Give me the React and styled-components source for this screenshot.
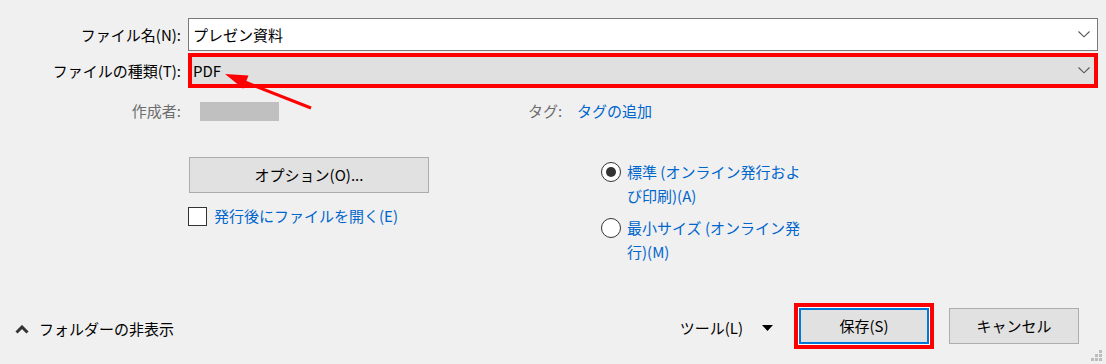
import React from 'react';
import styled, { createGlobalStyle } from 'styled-components';

const GlobalStyle = createGlobalStyle`
  html, body {
    margin: 0;
    padding: 0;
    background: #f0f0f0;
  }
  body {
    font-family: "Noto Sans CJK JP", "Noto Sans", sans-serif;
    font-size: 15px;
    color: #000;
  }
`;

const Dialog = styled.div`
  position: relative;
  width: 1106px;
  height: 364px;
  box-sizing: border-box;
  padding-top: 18px;
  display: flex;
  flex-direction: column;
  background: #f0f0f0;
  overflow: hidden;
`;

const FieldRow = styled.div`
  display: grid;
  grid-template-columns: 181px 1fr;
  column-gap: 7px;
  align-items: center;
  margin-top: ${p => p.$top || 0}px;
  padding-right: 8px;
`;

const Label = styled.div`
  text-align: right;
  line-height: 20px;
  white-space: nowrap;
  color: ${p => (p.$muted ? '#6d6d6d' : '#000')};
`;

const Combo = styled.div`
  height: ${p => p.$h}px;
  box-sizing: border-box;
  display: flex;
  align-items: center;
  justify-content: space-between;
  border: ${p => (p.$highlight ? '4px solid #ff0000' : '1px solid #7a7a7a')};
  background: ${p => (p.$highlight ? '#e0e0e0' : '#fff')};
  padding: 0 ${p => (p.$highlight ? 4 : 7)}px 0 ${p => (p.$highlight ? 1 : 4)}px;
  line-height: 20px;
`;

const MetaRow = styled.div`
  display: grid;
  grid-template-columns: 181px 347px 49px auto;
  align-items: center;
  height: 22px;
  margin-top: 12px;
  line-height: 20px;
`;

const AuthorBox = styled.div`
  width: 79px;
  height: 19px;
  margin-left: 19px;
  background: #c0c0c0;
`;

const Link = styled.span`
  color: #0066cc;
  white-space: nowrap;
`;

const OptionsArea = styled.div`
  display: grid;
  grid-template-columns: 188px 413px auto;
  margin-top: 35px;
`;

const LeftColumn = styled.div`
  grid-column: 2;
  display: flex;
  flex-direction: column;
  align-items: flex-start;
`;

const Button = styled.button`
  width: ${p => p.$w}px;
  height: 36px;
  box-sizing: border-box;
  border: 1px solid #adadad;
  background: #e1e1e1;
  font: inherit;
  color: #000;
  padding: 0;
  line-height: 20px;
`;

const CheckRow = styled.label`
  display: flex;
  align-items: center;
  gap: 7px;
  margin-top: 13px;
  line-height: 20px;
`;

const CheckBox = styled.span`
  width: 19px;
  height: 19px;
  box-sizing: border-box;
  border: 1px solid #333;
  background: #fff;
`;

const RadioGroup = styled.div`
  grid-column: 3;
  display: flex;
  flex-direction: column;
  gap: 8px;
  margin-top: 3px;
`;

const RadioItem = styled.label`
  display: grid;
  grid-template-columns: 20px 180px;
  column-gap: 6px;
  align-items: start;
  line-height: 24px;
`;

const RadioCircle = styled.span`
  width: 20px;
  height: 20px;
  box-sizing: border-box;
  margin-top: 2px;
  border: 1px solid #333;
  border-radius: 50%;
  background: #fff;
  display: flex;
  align-items: center;
  justify-content: center;
  &::after {
    content: '';
    width: 10px;
    height: 10px;
    border-radius: 50%;
    background: ${p => (p.$checked ? '#333' : 'transparent')};
  }
`;

const Footer = styled.div`
  margin-top: auto;
  height: 46px;
  margin-bottom: 15px;
  display: flex;
  align-items: center;
  padding: 0 27px 0 15px;
  line-height: 20px;
`;

const FolderToggle = styled.div`
  display: flex;
  align-items: center;
  gap: 10px;
  margin-top: 6px;
`;

const Spacer = styled.div`
  flex: 1;
`;

const Tools = styled.div`
  display: flex;
  align-items: center;
  gap: 19px;
  margin-top: 3px;
`;

const SaveFrame = styled.div`
  margin-left: 21px;
  border: 4px solid #ff0000;
  padding: 1px;
  background: #fff;
  display: flex;
`;

const SaveButton = styled(Button)`
  border: 2px solid #0078d7;
`;

const CancelButton = styled(Button)`
  margin-left: 15px;
`;

const Annotation = styled.svg`
  position: absolute;
  left: 0;
  top: 0;
  pointer-events: none;
`;

const Grip = styled.svg`
  position: absolute;
  right: 3px;
  bottom: 2px;
`;

const Chevron = () => (
  <svg width="12" height="7" viewBox="0 0 12 7">
    <polyline points="0.5,0.5 6,5.8 11.5,0.5" fill="none" stroke="#555" strokeWidth="1.1" />
  </svg>
);

export default function App() {
  return (
    <>
      <GlobalStyle />
      <Dialog>
        <FieldRow>
          <Label>ファイル名(N):</Label>
          <Combo $h={33}>
            <span>プレゼン資料</span>
            <Chevron />
          </Combo>
        </FieldRow>
        <FieldRow $top={2}>
          <Label>ファイルの種類(T):</Label>
          <Combo $h={35} $highlight>
            <span>PDF</span>
            <Chevron />
          </Combo>
        </FieldRow>

        <MetaRow>
          <Label $muted>作成者:</Label>
          <div>
            <AuthorBox />
          </div>
          <Label $muted style={{ textAlign: 'left' }}>タグ:</Label>
          <Link>タグの追加</Link>
        </MetaRow>

        <OptionsArea>
          <LeftColumn>
            <Button $w={240} style={{ marginLeft: 1 }}>オプション(O)...</Button>
            <CheckRow>
              <CheckBox />
              <Link>発行後にファイルを開く(E)</Link>
            </CheckRow>
          </LeftColumn>
          <RadioGroup>
            <RadioItem>
              <RadioCircle $checked />
              <Link style={{ whiteSpace: 'normal' }}>標準 (オンライン発行およ び印刷)(A)</Link>
            </RadioItem>
            <RadioItem>
              <RadioCircle />
              <Link style={{ whiteSpace: 'normal' }}>最小サイズ (オンライン発 行)(M)</Link>
            </RadioItem>
          </RadioGroup>
        </OptionsArea>

        <Footer>
          <FolderToggle>
            <svg width="14" height="9" viewBox="0 0 14 9">
              <polyline points="1.5,7.5 7,2 12.5,7.5" fill="none" stroke="#333" strokeWidth="3" />
            </svg>
            <span>フォルダーの非表示</span>
          </FolderToggle>
          <Spacer />
          <Tools>
            <span>ツール(L)</span>
            <svg width="11" height="6" viewBox="0 0 11 6">
              <polygon points="0,0 11,0 5.5,6" fill="#000" />
            </svg>
          </Tools>
          <SaveFrame>
            <SaveButton $w={130}>保存(S)</SaveButton>
          </SaveFrame>
          <CancelButton $w={130}>キャンセル</CancelButton>
        </Footer>

        <Annotation width="1106" height="364" viewBox="0 0 1106 364">
          <line x1="311" y1="108" x2="240" y2="80" stroke="#ff0000" strokeWidth="3" />
          <polygon points="225,74 248.5,75.4 243.2,88.8" fill="#ff0000" />
        </Annotation>

        <Grip width="12" height="12" viewBox="0 0 12 12">
          <rect x="8" y="0" width="3" height="3" fill="#bcbcbc" />
          <rect x="4" y="4" width="3" height="3" fill="#bcbcbc" />
          <rect x="8" y="4" width="3" height="3" fill="#bcbcbc" />
          <rect x="0" y="8" width="3" height="3" fill="#bcbcbc" />
          <rect x="4" y="8" width="3" height="3" fill="#bcbcbc" />
          <rect x="8" y="8" width="3" height="3" fill="#bcbcbc" />
        </Grip>
      </Dialog>
    </>
  );
}
